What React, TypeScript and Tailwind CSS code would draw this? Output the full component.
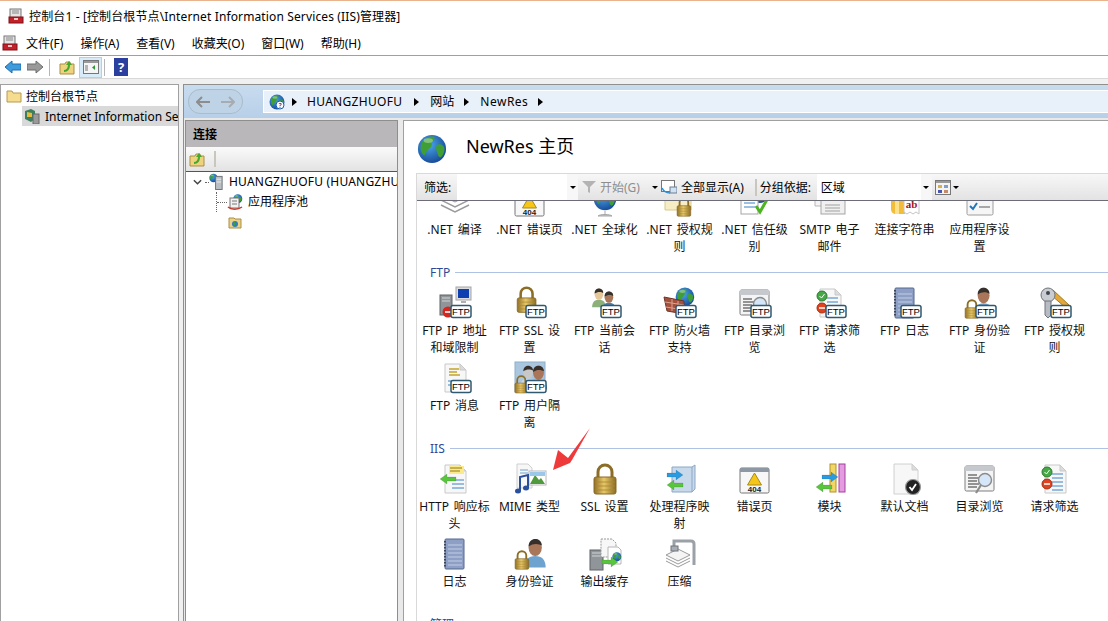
import type { ReactNode } from "react";

const cjk = "font-['Noto_Sans','Noto_Sans_CJK_SC',sans-serif]";

// small drawn icons, all on a 32 box unless noted
function Doc({ children }: { children?: ReactNode }) {
  return (
    <>
      <path d="M6 2h15l6 6v22H6z" fill="#f7f7f7" stroke="#c9c9c9" />
      <path d="M21 2v6h6z" fill="#dcdcdc" stroke="#c9c9c9" />
      {children}
    </>
  );
}

function Padlock({ x = 0, y = 0, s = 1 }: { x?: number; y?: number; s?: number }) {
  return (
    <g transform={`translate(${x} ${y}) scale(${s})`}>
      <path d="M9 15V9a7 7 0 0 1 14 0v6" fill="none" stroke="#8c6d26" strokeWidth="3" />
      <rect x="5" y="14" width="22" height="17" rx="2" fill="url(#gold)" stroke="#8a6a22" />
      <path d="M6 19h20M6 23h20M6 27h20" stroke="#a9852f" strokeWidth="0.8" />
    </g>
  );
}

function Person({ x = 0, y = 0, s = 1, shirt = "#6fa3cf", skin = "#a9765a" }: { x?: number; y?: number; s?: number; shirt?: string; skin?: string }) {
  return (
    <g transform={`translate(${x} ${y}) scale(${s})`}>
      <path d="M5 31c0-8 4-12 11-12s11 4 11 12z" fill={shirt} />
      <ellipse cx="16" cy="10" rx="7" ry="9" fill={skin} />
      <path d="M9 9c0-6 4-8 7-8s7 2 7 7c-3-2-9-3-14 1z" fill="#35302c" />
    </g>
  );
}

function Globe({ x = 0, y = 0, s = 1 }: { x?: number; y?: number; s?: number }) {
  return (
    <g transform={`translate(${x} ${y}) scale(${s})`}>
      <circle cx="16" cy="16" r="15" fill="url(#sea)" />
      <path d="M6 8c4-4 9-6 12-5 2 3-1 5-3 6 2 2 0 6-3 7-1 3-3 4-4 7-4-3-6-9-2-15zM21 12c3-2 6-1 8 2 1 4-1 9-4 11-3-1-3-5-4-7-1-2-1-4 0-6z" fill="#3f9f35" />
      <ellipse cx="12" cy="7" rx="5" ry="2.5" fill="#ffffff" opacity="0.35" />
    </g>
  );
}

function Ftp() {
  return (
    <g>
      <rect x="12" y="18.5" width="20" height="12" rx="2" fill="#fff" stroke="#2f5a70" strokeWidth="1.5" />
      <text x="22" y="28" textAnchor="middle" fontSize="9.5" fontFamily="Liberation Sans, sans-serif" fill="#000">FTP</text>
    </g>
  );
}

function Arrow({ x, y, fill, flip }: { x: number; y: number; fill: string; flip?: boolean }) {
  return (
    <path
      transform={`translate(${x} ${y}) ${flip ? "scale(-1 1)" : ""}`}
      d="M0 3h9V0l7 5-7 5V7H0z"
      fill={fill}
      stroke="#00000033"
      strokeWidth="0.5"
    />
  );
}

function Window404() {
  return (
    <>
      <rect x="1" y="5" width="29" height="25" rx="1.5" fill="#f7f7f7" stroke="#777" />
      <rect x="1" y="5" width="29" height="4" fill="#8e98a5" />
      <path d="M15.5 10l7 12h-14z" fill="#f5c518" stroke="#a88a16" />
      <text x="15.5" y="29" textAnchor="middle" fontSize="8" fontWeight="700" fontFamily="Liberation Sans, sans-serif" fill="#222">404</text>
    </>
  );
}

function Notebook() {
  return (
    <>
      <rect x="6" y="1" width="19" height="30" rx="1" fill="#8e9fc6" stroke="#56678f" />
      <path d="M9 7h14M9 11h14M9 15h14M9 19h14M9 23h14M9 27h14" stroke="#c2cee4" />
      <path d="M6 3v27" stroke="#3e4658" strokeWidth="2" strokeDasharray="1.5 1.5" />
    </>
  );
}

function FilterDoc() {
  return (
    <Doc>
      <path d="M13 11h11M13 15h11M13 19h11M13 23h11M13 27h11" stroke="#3b82c4" />
      <circle cx="8" cy="9" r="5" fill="#46a846" stroke="#2d7a2d" />
      <path d="M5.5 9l2 2 3-4" stroke="#fff" fill="none" />
      <circle cx="8" cy="21" r="5" fill="#e0431f" stroke="#a5300f" />
      <path d="M5 21h6" stroke="#fff" strokeWidth="1.5" />
    </Doc>
  );
}

function Browse() {
  return (
    <>
      <rect x="1" y="3" width="29" height="25" rx="1.5" fill="#f4f4f4" stroke="#7e7e7e" />
      <rect x="1" y="3" width="29" height="5" fill="#c5c8cc" />
      <path d="M4 12h9M4 15h11M4 18h9M4 21h11M4 24h9" stroke="#333" />
      <circle cx="21" cy="17" r="6.5" fill="#d4e6f7" stroke="#8b8b8b" strokeWidth="1.4" />
      <path d="M17 22l-5 8" stroke="#8b8b8b" strokeWidth="2.2" />
    </>
  );
}

function MiniKey() {
  return (
    <>
      <path d="M14 3l16 15-3 3-15-13z" fill="#e2a83a" stroke="#a87a1e" />
      <circle cx="9" cy="8" r="7" fill="#c9ccd1" stroke="#6e747c" />
      <circle cx="9" cy="6" r="2" fill="#40454c" />
      <path d="M6 14h6v14l-3 3-3-3z" fill="#b8bcc2" stroke="#6e747c" />
    </>
  );
}

const icons: Record<string, ReactNode> = {
  compile: (
    <>
      <path d="M16 2l14 7-14 7-14-7z" fill="#f5f5f5" stroke="#9a9a9a" />
      <path d="M2 14l14 7 14-7M2 19l14 7 14-7" fill="none" stroke="#9a9a9a" strokeWidth="1.4" />
    </>
  ),
  err: <Window404 />,
  glob: (
    <>
      <Globe x={4} y={1} s={0.75} />
      <path d="M16 25v3M9 30c2-2 12-2 14 0z" fill="#c4c7c9" stroke="#a7a7a7" />
    </>
  ),
  authz: (
    <>
      <path d="M1 4h21l5 5v15H1z" fill="#f7edc4" stroke="#d9c98b" />
      <Padlock x={10} y={11} s={0.62} />
    </>
  ),
  trust: (
    <>
      <Globe x={12} y={0} s={0.55} />
      <rect x="2" y="6" width="17" height="22" fill="#fff" stroke="#a5a5a5" />
      <path d="M5 13h11M5 17h11M5 21h11" stroke="#3b82c4" />
      <path d="M17 20l4 6 9-16" fill="none" stroke="#4db31e" strokeWidth="3" />
    </>
  ),
  smtp: (
    <>
      <path d="M1 4h16v16H1z" fill="#f4f4f4" stroke="#b8b8b8" />
      <rect x="7" y="8" width="24" height="20" fill="#f0f0f0" stroke="#a5a5a5" />
      <rect x="26" y="11" width="3" height="3" fill="#d92b2b" />
      <path d="M11 19h15M11 22h15M11 25h15" stroke="#a0a0a0" />
    </>
  ),
  conn: (
    <>
      <path d="M2 4h14v24H7c-3 0-5-2-5-5z" fill="#f3bd3c" />
      <path d="M6 4h4v24H6z" fill="#fde28b" />
      <path d="M15 10h15v18l-3-2-3 2-3-2-3 2-3-2z" fill="#fff" stroke="#c5c5c5" />
      <text x="22.5" y="22" textAnchor="middle" fontSize="11" fontWeight="700" fontFamily="Liberation Serif, serif" fill="#a1121a">ab</text>
    </>
  ),
  settings: (
    <>
      <rect x="3" y="3" width="26" height="26" rx="1.5" fill="#f6f6f6" stroke="#9c9c9c" />
      <path d="M6 10l3 3 4-6M6 20l3 3 4-6" fill="none" stroke="#1f76bd" strokeWidth="2" />
      <path d="M15 11h11M15 21h11" stroke="#5a5a5a" />
    </>
  ),
  ipFtp: (
    <>
      <rect x="1" y="8" width="12" height="20" fill="#8f9599" stroke="#5e6366" />
      <path d="M3 11h8M3 14h8" stroke="#d2d4d6" />
      <rect x="17" y="0" width="15" height="13" fill="#dcdcdc" stroke="#a5a5a5" />
      <rect x="19" y="2" width="11" height="9" fill="#0d3fb0" />
      <path d="M22 15h5" stroke="#b0b0b0" strokeWidth="2" />
      <circle cx="9" cy="25" r="5.5" fill="#d6261d" />
      <path d="M6 25h6" stroke="#fff" strokeWidth="1.6" />
      <Ftp />
    </>
  ),
  lockFtp: (
    <>
      <Padlock x={-1} y={-1} s={0.85} />
      <Ftp />
    </>
  ),
  sessFtp: (
    <>
      <Person x={0} y={1} s={0.62} shirt="#8cb07a" skin="#e6c79b" />
      <Person x={10} y={4} s={0.62} shirt="#4e7fa8" />
      <Ftp />
    </>
  ),
  fireFtp: (
    <>
      <Globe x={11} y={0} s={0.62} />
      <path d="M0 10l20 4v13L3 24z" fill="#a5503d" stroke="#6e3326" />
      <path d="M1 15l19 3M2 20l18 3M8 12v12M14 14v11" stroke="#d9a692" />
      <Ftp />
    </>
  ),
  browseFtp: (
    <>
      <Browse />
      <Ftp />
    </>
  ),
  filterFtp: (
    <>
      <FilterDoc />
      <Ftp />
    </>
  ),
  logFtp: (
    <>
      <Notebook />
      <Ftp />
    </>
  ),
  authFtp: (
    <>
      <Person x={6} y={0} s={0.85} />
      <Padlock x={-2} y={12} s={0.62} />
      <Ftp />
    </>
  ),
  keyFtp: (
    <>
      <MiniKey />
      <Ftp />
    </>
  ),
  msgFtp: (
    <>
      <Doc>
        <path d="M10 7h10M10 10h8M10 13h11" stroke="#c2a52a" strokeWidth="1.5" />
        <path d="M9 19h8M9 23h8" stroke="#3b82c4" />
      </Doc>
      <Ftp />
    </>
  ),
  isoFtp: (
    <>
      <rect x="1" y="0" width="30" height="30" fill="#a9c6de" stroke="#8eaec9" />
      <Person x={3} y={3} s={0.7} shirt="#c7d6e2" skin="#c8c8c8" />
      <Person x={12} y={3} s={0.78} shirt="#4e7fa8" />
      <Padlock x={-2} y={13} s={0.58} />
      <Ftp />
    </>
  ),
  http: (
    <>
      <Doc>
        <rect x="10" y="3" width="15" height="8" fill="#fbe98a" />
        <path d="M11 5h12M11 8h10" stroke="#8c7a18" />
        <path d="M13 17h12M13 21h12M13 25h12" stroke="#3b82c4" />
      </Doc>
      <Arrow x={17} y={11} fill="#59c43d" flip />
    </>
  ),
  mime: (
    <>
      <path d="M3 1h11l4 4v20H3z" fill="#f7f7f7" stroke="#cfcfcf" />
      <path d="M6 7h8M6 10h8" stroke="#6fa3cf" />
      <rect x="15" y="8" width="17" height="14" fill="#fff" stroke="#b8b8b8" />
      <path d="M16 21l5-9 4 5 2-2 4 6z" fill="#4f9a3c" />
      <rect x="16" y="9" width="15" height="4" fill="#9ac7ea" />
      <path d="M6 28V14l8-2v13" fill="none" stroke="#2a4f9c" strokeWidth="2" />
      <ellipse cx="4" cy="28" rx="3" ry="2.5" fill="#2a4f9c" />
      <ellipse cx="12" cy="25" rx="3" ry="2.5" fill="#2a4f9c" />
    </>
  ),
  ssl: <Padlock x={0} y={0} s={1} />,
  handler: (
    <>
      <path d="M8 4h20l3-2v24l-3 3H8z" fill="#c8d9ec" stroke="#8ca6c4" />
      <path d="M28 4v25" stroke="#8ca6c4" />
      <Arrow x={3} y={7} fill="#2a9be0" />
      <Arrow x={19} y={17} fill="#59c43d" flip />
    </>
  ),
  module: (
    <>
      <rect x="16" y="1" width="6" height="28" fill="#f2d766" stroke="#b1932a" />
      <rect x="25" y="1" width="6" height="28" fill="#e59be0" stroke="#a23ea0" />
      <Arrow x={8} y={9} fill="#2a9be0" />
      <Arrow x={18} y={19} fill="#59c43d" flip />
    </>
  ),
  defdoc: (
    <>
      <path d="M5 1h18l6 6v24H5z" fill="#f7f7f7" stroke="#d0d0d0" />
      <path d="M23 1v6h6z" fill="#dcdcdc" stroke="#cfcfcf" />
      <circle cx="24" cy="24" r="7.5" fill="#222" stroke="#999" strokeWidth="1.2" />
      <path d="M20.5 24l2.5 3 4-6" fill="none" stroke="#fff" strokeWidth="1.8" />
    </>
  ),
  browse: <Browse />,
  filter: <FilterDoc />,
  log: <Notebook />,
  auth: (
    <>
      <Person x={6} y={0} s={0.95} />
      <Padlock x={-2} y={12} s={0.62} />
    </>
  ),
  cache: (
    <>
      <rect x="1" y="12" width="13" height="20" fill="#8f9599" stroke="#5e6366" />
      <path d="M3 15h9M3 18h9" stroke="#d2d4d6" />
      <path d="M12 1h11l4 4v14H12z" fill="#f7f7f7" stroke="#9a9a9a" strokeDasharray="2 1" />
      <path d="M19 9h10l3 3v14H19z" fill="#fff" stroke="#b5b5b5" />
      <Globe x={23} y={14} s={0.3} />
      <Arrow x={13} y={19} fill="#59c43d" />
    </>
  ),
  compress: (
    <>
      <path d="M2 17l12-6 12 6-12 6z" fill="#f5f5f5" stroke="#9a9a9a" />
      <path d="M2 20l12 6 12-6M2 23l12 6 12-6" fill="none" stroke="#9a9a9a" />
      <path d="M10 8V3h17c2 0 3 1 3 3v21" fill="none" stroke="#9ba1a6" strokeWidth="3" />
      <rect x="7" y="8" width="7" height="5" fill="#a7adb3" stroke="#6f757b" />
    </>
  ),
};

type Tile = { icon: string; label: string };

const groups: { title?: string; tiles: Tile[] }[] = [
  {
    tiles: [
      { icon: "compile", label: ".NET 编译" },
      { icon: "err", label: ".NET 错误页" },
      { icon: "glob", label: ".NET 全球化" },
      { icon: "authz", label: ".NET 授权规则" },
      { icon: "trust", label: ".NET 信任级别" },
      { icon: "smtp", label: "SMTP 电子邮件" },
      { icon: "conn", label: "连接字符串" },
      { icon: "settings", label: "应用程序设置" },
    ],
  },
  {
    title: "FTP",
    tiles: [
      { icon: "ipFtp", label: "FTP IP 地址和域限制" },
      { icon: "lockFtp", label: "FTP SSL 设置" },
      { icon: "sessFtp", label: "FTP 当前会话" },
      { icon: "fireFtp", label: "FTP 防火墙支持" },
      { icon: "browseFtp", label: "FTP 目录浏览" },
      { icon: "filterFtp", label: "FTP 请求筛选" },
      { icon: "logFtp", label: "FTP 日志" },
      { icon: "authFtp", label: "FTP 身份验证" },
      { icon: "keyFtp", label: "FTP 授权规则" },
      { icon: "msgFtp", label: "FTP 消息" },
      { icon: "isoFtp", label: "FTP 用户隔离" },
    ],
  },
  {
    title: "IIS",
    tiles: [
      { icon: "http", label: "HTTP 响应标头" },
      { icon: "mime", label: "MIME 类型" },
      { icon: "ssl", label: "SSL 设置" },
      { icon: "handler", label: "处理程序映射" },
      { icon: "err", label: "错误页" },
      { icon: "module", label: "模块" },
      { icon: "defdoc", label: "默认文档" },
      { icon: "browse", label: "目录浏览" },
      { icon: "filter", label: "请求筛选" },
      { icon: "log", label: "日志" },
      { icon: "auth", label: "身份验证" },
      { icon: "cache", label: "输出缓存" },
      { icon: "compress", label: "压缩" },
    ],
  },
  { title: "管理", tiles: [] },
];

const menus = ["文件(F)", "操作(A)", "查看(V)", "收藏夹(O)", "窗口(W)", "帮助(H)"];

function Toolbox({ size = 16 }: { size?: number }) {
  return (
    <svg width={size} height={size} viewBox="0 0 16 16" className="shrink-0">
      <rect x="2" y="1" width="11" height="9" fill="#e4e4e4" stroke="#777" />
      <path d="M4 3h7M4 5h7" stroke="#888" />
      <rect x="1" y="9" width="14" height="6" fill="#c4202a" stroke="#7e1017" />
      <rect x="6" y="10" width="4" height="2" fill="#f2c6c6" />
    </svg>
  );
}

function Caret({ className = "" }: { className?: string }) {
  return <span className={`block h-0 w-0 border-x-[3px] border-t-[3px] border-x-transparent border-t-black ${className}`} />;
}

function Chevron({ className = "" }: { className?: string }) {
  return <span className={`block h-0 w-0 shrink-0 border-y-[4px] border-l-[5px] border-y-transparent border-l-black ${className}`} />;
}

function FolderUp() {
  return (
    <svg width="16" height="16" viewBox="0 0 16 16" className="shrink-0">
      <path d="M1 5h5l1-2h4v2h4v10H1z" fill="#eed27e" stroke="#a98f45" />
      <path d="M5 11c2 0 4-2 4-5H7l3-4 3 4h-2c0 4-2 7-6 7z" fill="#46a92f" />
    </svg>
  );
}

function SmallFolder() {
  return (
    <svg width="14" height="14" viewBox="0 0 14 14">
      <path d="M1 3h5l1 1h6v9H1z" fill="#ecd189" stroke="#a98f45" />
      <circle cx="7" cy="9" r="3" fill="#2c7fbf" />
      <path d="M5 8l2-1 1 2-2 2z" fill="#3f9f35" />
    </svg>
  );
}

function TileItem({ tile }: { tile: Tile }) {
  return (
    <div className="flex h-[75px] w-[75px] flex-col items-center">
      <svg width="32" height="32" viewBox="0 0 32 32" className="h-[32px] shrink-0 overflow-visible">
        {icons[tile.icon]}
      </svg>
      <div className="mt-[3px] w-[71px] text-center text-[12px] leading-[17px] text-[#111] [word-spacing:1.5px]">{tile.label}</div>
    </div>
  );
}

export default function App() {
  return (
    <div className={`flex h-[621px] w-[1108px] flex-col overflow-hidden bg-[#f0f0f0] text-[12px] text-black ${cjk}`}>
      <svg width="0" height="0" className="absolute">
        <defs>
          <linearGradient id="gold" x1="0" x2="1" y1="0" y2="0">
            <stop offset="0" stopColor="#8f6f28" />
            <stop offset="0.45" stopColor="#e7c868" />
            <stop offset="1" stopColor="#8a6a24" />
          </linearGradient>
          <radialGradient id="sea" cx="0.4" cy="0.35" r="0.75">
            <stop offset="0" stopColor="#4aa6ea" />
            <stop offset="1" stopColor="#12408f" />
          </radialGradient>
        </defs>
      </svg>

      {/* title bar */}
      <div className="flex h-[31px] items-center gap-[5px] border-t border-[#e9b48d] bg-white pl-[8px]">
        <Toolbox />
        <span className="mt-[2px] tracking-[0.13px]">控制台1 - [控制台根节点\Internet Information Services (IIS)管理器]</span>
      </div>

      {/* menu */}
      <div className="flex h-[25px] items-center border-b border-[#a0a0a0] bg-white pl-[2px]">
        <Toolbox />
        <div className="ml-[8px] mt-[2px] flex gap-[17px]">
          {menus.map((m) => (
            <span key={m}>{m}</span>
          ))}
        </div>
      </div>

      {/* toolbar */}
      <div className="flex h-[23px] items-center border-b border-[#d8d8d8] bg-white pl-[5px]">
        <svg width="16" height="14" viewBox="0 0 16 14">
          <path d="M0 7l7-6v3h9v6H7v3z" fill="#3f9bdc" stroke="#1f6fae" />
        </svg>
        <svg width="16" height="14" viewBox="0 0 16 14" className="ml-[6px]">
          <path d="M16 7L9 1v3H0v6h9v3z" fill="#9a9a9a" stroke="#6d6d6d" />
        </svg>
        <span className="ml-[6px] h-[17px] w-px bg-[#b5b5b5]" />
        <span className="ml-[9px]">
          <FolderUp />
        </span>
        <span className="ml-[4px] flex h-[21px] w-[23px] items-center justify-center border border-[#a9d3ee] bg-[#d8ebf8]">
          <svg width="16" height="14" viewBox="0 0 16 14">
            <rect x="0.5" y="0.5" width="15" height="13" fill="#f5f5f5" stroke="#777" />
            <rect x="1" y="1" width="14" height="2" fill="#9a9a9a" />
            <path d="M2 6h3M2 8h3M2 10h3" stroke="#777" />
            <path d="M12 5v5l-3-2.5z" fill="#2f9a33" />
          </svg>
        </span>
        <span className="ml-[2px] h-[17px] w-px bg-[#b5b5b5]" />
        <span className="ml-[9px] flex h-[18px] w-[14px] items-center justify-center bg-[#2b3f9f] text-[13px] font-bold leading-none text-white">?</span>
      </div>

      {/* main area */}
      <div className="flex min-h-0 flex-1 pt-[5px]">
        {/* console tree */}
        <div className="h-full w-[179px] shrink-0 border border-b-0 border-[#a0a0a0] bg-white">
          <div className="flex h-[21px] items-center gap-[4px] pl-[5px]">
            <svg width="16" height="14" viewBox="0 0 16 14">
              <path d="M1 2h5l1 2h8v9H1z" fill="#f6dc8f" stroke="#b59a4f" />
            </svg>
            <span className="mt-[2px]">控制台根节点</span>
          </div>
          <div className="ml-[21px] flex h-[20px] items-center gap-[5px] overflow-hidden whitespace-nowrap bg-[#d9d9d9] pl-[2px]">
            <svg width="16" height="16" viewBox="0 0 16 16" className="shrink-0">
              <path d="M1 3l6-2 4 2v8l-4 3-6-3z" fill="#3c7f5e" />
              <path d="M3 4l5 1v4H3z" fill="#e6bc36" />
              <rect x="9" y="6" width="6" height="10" fill="#9a9a9a" stroke="#666" />
            </svg>
            <span className="mt-[2px]">Internet Information Services</span>
          </div>
        </div>

        {/* right pane */}
        <div className="ml-[4px] flex min-w-0 flex-1 flex-col border-l border-t border-[#8f8f8f]">
          {/* nav */}
          <div className="flex h-[33px] shrink-0 items-center bg-gradient-to-b from-[#c8dcef] to-[#b7cfe8] pl-[4px]">
            <div className="flex h-[25px] w-[55px] items-center justify-around rounded-[12px] border border-[#a9bccc] bg-[#bfd3e6] px-[3px]">
              <svg width="15" height="12" viewBox="0 0 15 12">
                <path d="M6 1L1 6l5 5M1 6h13" fill="none" stroke="#8d8d8d" strokeWidth="2" />
              </svg>
              <svg width="15" height="12" viewBox="0 0 15 12">
                <path d="M9 1l5 5-5 5M14 6H1" fill="none" stroke="#a6acb2" strokeWidth="2" />
              </svg>
            </div>
            <div className="ml-[20px] flex h-[23px] min-w-0 flex-1 items-center border border-r-0 border-white bg-[#e8f0f9] pl-[5px]">
              <svg width="16" height="16" viewBox="0 0 32 32" className="shrink-0">
                <Globe />
                <circle cx="22" cy="22" r="8" fill="#fff" stroke="#1d5fae" strokeWidth="2" />
                <text x="22" y="27" textAnchor="middle" fontSize="13" fontWeight="700" fill="#1d5fae">?</text>
              </svg>
              <Chevron className="ml-[7px]" />
              <span className="ml-[10px] tracking-[0.3px]">HUANGZHUOFU</span>
              <Chevron className="ml-[12px]" />
              <span className="ml-[11px]">网站</span>
              <Chevron className="ml-[10px]" />
              <span className="ml-[11px] tracking-[0.5px]">NewRes</span>
              <Chevron className="ml-[10px]" />
            </div>
          </div>

          <div className="flex min-h-0 flex-1 bg-[#e9e9e9] pt-[2px]">
            {/* connections */}
            <div className="ml-[1px] flex h-full w-[213px] shrink-0 flex-col border-x border-t border-[#8e8e8e] bg-white">
              <div className="flex h-[26px] items-center bg-[#b9b7b9] pl-[7px] pt-[2px] font-bold">连接</div>
              <div className="flex h-[25px] items-center border-b border-[#555] bg-gradient-to-b from-[#fafafa] to-[#e4e3e4] pl-[3px]">
                <FolderUp />
                <span className="ml-[9px] h-[16px] w-[2px] bg-[#c9c7bd]" />
              </div>
              <div className="overflow-hidden">
                <div className="flex h-[20px] items-center whitespace-nowrap pl-[7px]">
                  <svg width="9" height="8" viewBox="0 0 10 8" className="shrink-0">
                    <path d="M1 2l4 4 4-4" fill="none" stroke="#444" strokeWidth="1.6" />
                  </svg>
                  <span className="ml-[3px] w-[4px] shrink-0 border-b border-dotted border-[#666]" />
                  <svg width="15" height="18" viewBox="0 0 16 18" className="shrink-0">
                    <Globe x={0} y={0} s={0.3} />
                    <rect x="7" y="3" width="7" height="14" fill="#b9bfc4" stroke="#6b7175" />
                    <path d="M8 6h5M8 9h5" stroke="#eee" />
                  </svg>
                  <span className="ml-[5px] tracking-[0.2px]">HUANGZHUOFU (HUANGZHUOFU\Administrator)</span>
                </div>
                <div className="ml-[30px] flex h-[20px] items-center border-l border-dotted border-[#666]">
                  <span className="w-[10px] border-b border-dotted border-[#666]" />
                  <svg width="16" height="16" viewBox="0 0 16 16">
                    <Globe x={6} y={0} s={0.3} />
                    <rect x="3" y="4" width="9" height="10" fill="#f2f2f2" stroke="#777" />
                    <path d="M5 7h5M5 10h5" stroke="#777" />
                    <path d="M1 13c3 3 10 3 14 0" fill="none" stroke="#c73a2c" strokeWidth="1.5" />
                  </svg>
                  <span className="ml-[5px]">应用程序池</span>
                </div>
                <div className="flex h-[20px] items-center pl-[42px]">
                  <SmallFolder />
                </div>
              </div>
            </div>

            {/* home page */}
            <div className="ml-[5px] flex h-full min-w-0 flex-1 flex-col border-l border-t border-[#a0a0a0] bg-white">
              <div className="flex h-[52px] shrink-0 items-center pl-[13px]">
                <svg width="30" height="32" viewBox="0 0 32 32" className="mt-[4px]">
                  <Globe />
                </svg>
                <span className="mb-[2px] ml-[19px] text-[18px]">NewRes 主页</span>
              </div>
              <div className="ml-[12px] flex min-h-0 flex-1 flex-col border-l border-t border-[#d9d9d9]">
                <div className="flex h-[27px] shrink-0 items-center border-b border-[#6d6d78] bg-gradient-to-b from-[#f7f7f7] to-[#e4e3e4] pl-[7px]">
                  <span className="mt-[2px] w-[33px]">筛选:</span>
                  <span className="h-[26px] w-[110px] bg-white" />
                  <span className="flex h-[26px] w-[11px] items-center justify-center bg-[#f7f7f7]">
                    <Caret />
                  </span>
                  <svg width="14" height="14" viewBox="0 0 14 14" className="ml-[4px]">
                    <path d="M0 1h14L8 7v6l-2-1V7z" fill="#b3b3b3" />
                  </svg>
                  <span className="ml-[4px] mt-[2px] text-[#8d8d8d]">开始(G)</span>
                  <Caret className="ml-[12px] border-t-[#9a9a9a]" />
                  <svg width="16" height="16" viewBox="0 0 16 16" className="ml-[3px]">
                    <rect x="0.5" y="1.5" width="13" height="11" fill="#fff" stroke="#777" />
                    <path d="M1 9c2 4 5 5 8 5" fill="none" stroke="#2a8fd6" strokeWidth="1.6" />
                    <rect x="9" y="8" width="7" height="6" fill="#cfe3f5" stroke="#6c7f92" />
                  </svg>
                  <span className="ml-[4px] mt-[2px]">全部显示(A)</span>
                  <span className="ml-[11px] h-[17px] w-[2px] bg-[#c9c7bd]" />
                  <span className="ml-[3px] mt-[2px] w-[57px]">分组依据:</span>
                  <span className="flex h-[26px] w-[104px] items-center bg-white pl-[4px] pt-[2px]">区域</span>
                  <span className="flex h-[26px] w-[11px] items-center justify-center bg-[#f7f7f7]">
                    <Caret />
                  </span>
                  <svg width="16" height="15" viewBox="0 0 16 15" className="ml-[3px]">
                    <rect x="0.5" y="0.5" width="15" height="14" fill="#f4f4f4" stroke="#777" />
                    <rect x="1" y="1" width="14" height="2" fill="#9a9a9a" />
                    <rect x="3" y="5" width="4" height="3" fill="#d8b04a" />
                    <rect x="9" y="5" width="4" height="3" fill="#7f9ec9" />
                    <rect x="3" y="10" width="4" height="3" fill="#4a57b0" />
                    <rect x="9" y="10" width="4" height="3" fill="#c58a6a" />
                  </svg>
                  <Caret className="ml-[2px]" />
                </div>

                {/* the list is scrolled a little, so the first row's icons are cut off */}
                <div className="min-h-0 flex-1 overflow-hidden">
                  <div className="-mt-[15px]">
                    {groups.map((group, i) => (
                      <div key={group.title ?? i}>
                        {group.title && (
                          <div className="mb-[4px] flex h-[22px] items-center gap-[5px] pl-[13px]">
                            <span className="mt-[2px] text-[#2b4a9c]">{group.title}</span>
                            <span className="mt-[1px] h-px flex-1 bg-[#b0c1e6]" />
                          </div>
                        )}
                        <div className="flex w-[675px] flex-wrap">
                          {group.tiles.map((tile) => (
                            <TileItem key={tile.label} tile={tile} />
                          ))}
                        </div>
                      </div>
                    ))}
                  </div>
                </div>
              </div>
            </div>
          </div>
        </div>
      </div>

      {/* red annotation arrow over the MIME tile */}
      <svg width="44" height="44" viewBox="0 0 44 44" className="pointer-events-none absolute left-[546px] top-[428px]">
        <path d="M44 0L26 32l-2 3L7 42l5-20 10 8z" fill="#ee3a3a" />
      </svg>
    </div>
  );
}
